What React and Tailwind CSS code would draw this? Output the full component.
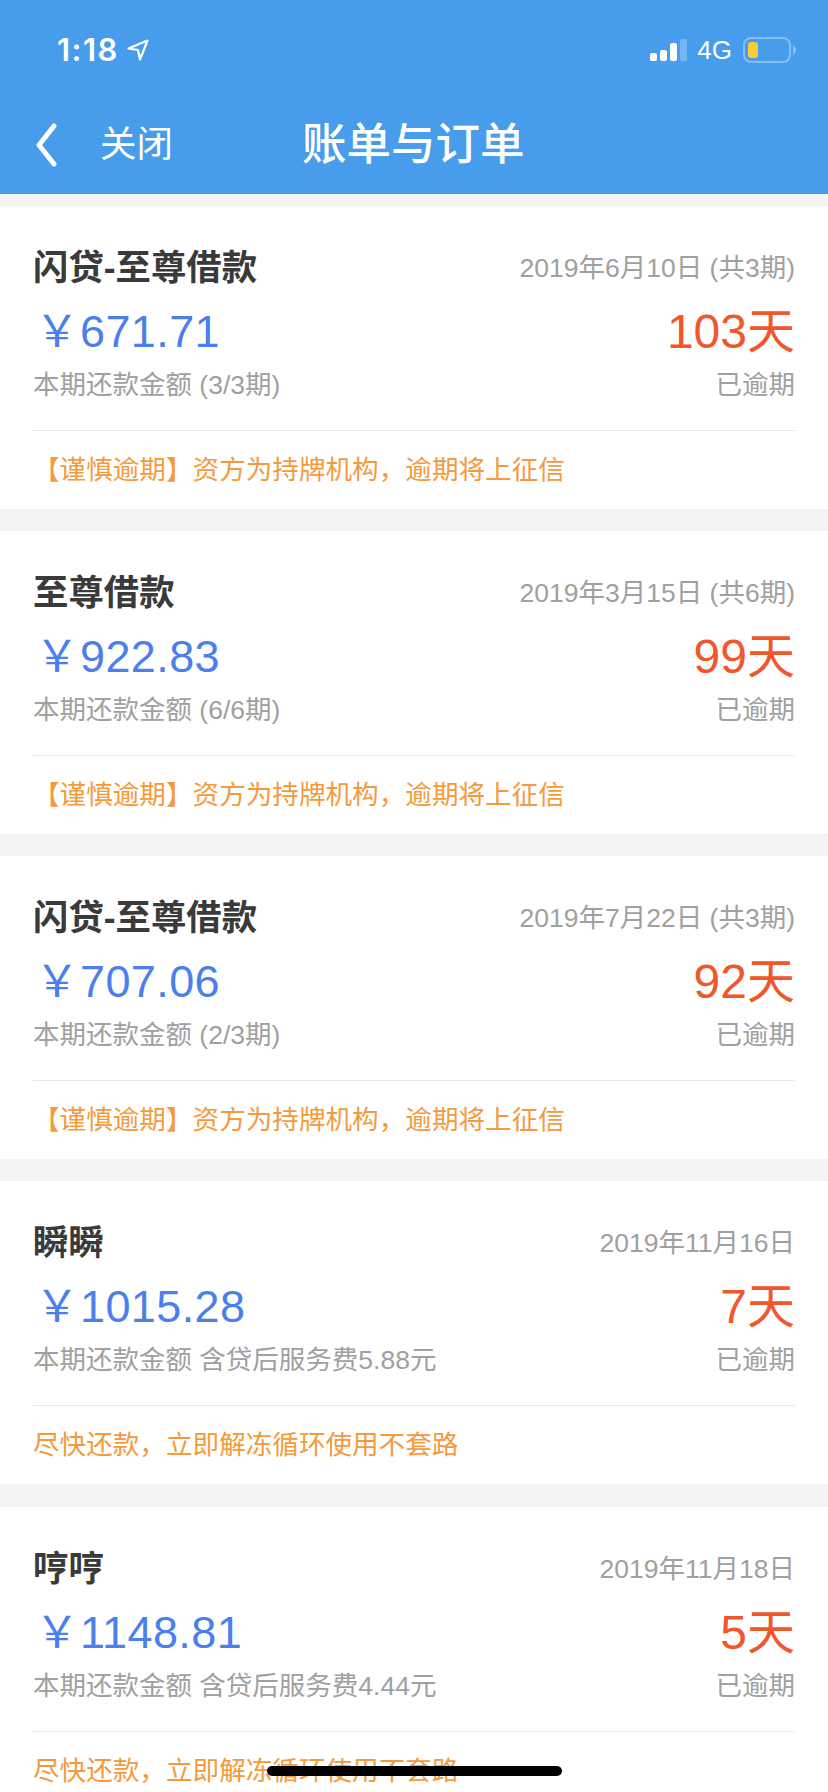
const FONT = '"Liberation Sans", "Noto Sans CJK SC", sans-serif';

const cards = [
  { t: '闪贷-至尊借款', d: '2019年6月10日 (共3期)', a: '671.71', n: '103天', s: '本期还款金额 (3/3期)', w: '【谨慎逾期】资方为持牌机构，逾期将上征信' },
  { t: '至尊借款', d: '2019年3月15日 (共6期)', a: '922.83', n: '99天', s: '本期还款金额 (6/6期)', w: '【谨慎逾期】资方为持牌机构，逾期将上征信' },
  { t: '闪贷-至尊借款', d: '2019年7月22日 (共3期)', a: '707.06', n: '92天', s: '本期还款金额 (2/3期)', w: '【谨慎逾期】资方为持牌机构，逾期将上征信' },
  { t: '瞬瞬', d: '2019年11月16日', a: '1015.28', n: '7天', s: '本期还款金额 含贷后服务费5.88元', w: '尽快还款，立即解冻循环使用不套路' },
  { t: '哼哼', d: '2019年11月18日', a: '1148.81', n: '5天', s: '本期还款金额 含贷后服务费4.44元', w: '尽快还款，立即解冻循环使用不套路' },
];

function Card({ c }) {
  return (
    <div className="bg-white h-[303px] shrink-0 pl-[33px] pr-[33px] flex flex-col">
      <div className="flex justify-between items-center h-[38px] mt-[43px]">
        <span className="text-[35.4px] leading-[38px] font-bold text-[#3a3a3a]">{c.t}</span>
        <span className="text-[26.5px] leading-[38px] text-[#a0a0a0]">{c.d}</span>
      </div>
      <div className="flex justify-between items-center h-[50px] mt-[20px]">
        <span className="flex items-center text-[#4a7fec] pl-[2px]">
          <span className="text-[44px] leading-[50px]">￥</span>
          <span className="text-[45px] leading-[50px] tracking-[0.4px] ml-[1px]">{c.a}</span>
        </span>
        <span className="text-[48px] leading-[50px] text-[#f0572b]">{c.n}</span>
      </div>
      <div className="flex justify-between items-center h-[38px] mt-[9px]">
        <span className="text-[26.5px] leading-[38px] text-[#a0a0a0]">{c.s}</span>
        <span className="text-[26.5px] leading-[38px] text-[#a0a0a0]">已逾期</span>
      </div>
      <div className="h-px bg-[#e8e8e8] mt-[26px]" />
      <div className="text-[26.6px] leading-[38px] text-[#f59a3c] mt-[20px] whitespace-nowrap">{c.w}</div>
    </div>
  );
}

export default function App() {
  return (
    <div className="relative h-[1792px] w-[828px] overflow-hidden bg-[#f4f4f4] flex flex-col" style={{ fontFamily: FONT }}>
      <header className="bg-[#479dec] h-[194px] shrink-0 text-white">
        <div className="flex justify-between items-center h-[34px] pt-[33px] pl-[57px] pr-[32px] box-content">
          <div className="flex items-center gap-[8px]">
            <span className="text-[31px] leading-[34px] font-semibold font-['Inter'] tracking-[1.5px]">1:18</span>
            <svg width="22" height="22" viewBox="0 0 22 22">
              <path d="M20.5 1.5 L1.5 9.5 L11 11 L13 20.5 Z" fill="none" stroke="white" strokeWidth="2.2" strokeLinejoin="round" />
            </svg>
          </div>
          <div className="flex items-center">
            <svg width="37" height="22" viewBox="0 0 37 22">
              <rect x="0" y="14" width="7" height="8" rx="2" fill="white" />
              <rect x="10" y="11" width="7" height="11" rx="2" fill="white" />
              <rect x="20" y="4" width="7" height="18" rx="2" fill="white" />
              <rect x="30" y="0" width="7" height="22" rx="1.5" fill="white" fillOpacity="0.25" />
            </svg>
            <span className="text-[26px] leading-[30px] ml-[10px]">4G</span>
            <svg width="53" height="26" viewBox="0 0 53 26" className="ml-[11px]">
              <rect x="1" y="1" width="46" height="24" rx="7" fill="none" stroke="white" strokeOpacity="0.35" strokeWidth="2" />
              <rect x="5" y="5" width="10" height="16" rx="3" fill="#f8cd3a" />
              <path d="M50 8.5 C52 9.5 53 11 53 13 C53 15 52 16.5 50 17.5 Z" fill="white" fillOpacity="0.35" />
            </svg>
          </div>
        </div>
        <div className="flex items-center h-[60px] mt-[48px] pl-[35px]">
          <svg width="22" height="44" viewBox="0 0 22 44" className="shrink-0">
            <path d="M19 3 L4 22 L19 41" fill="none" stroke="white" strokeWidth="5" strokeLinecap="round" strokeLinejoin="round" />
          </svg>
          <span className="text-[36.5px] leading-[50px] ml-[43px] w-[202px]">关闭</span>
          <span className="text-[44.5px] leading-[60px] font-medium">账单与订单</span>
        </div>
      </header>
      <main className="flex flex-col gap-[22.33px] pt-[11.5px]">
        {cards.map((c, i) => (
          <Card key={i} c={c} />
        ))}
      </main>
      <div className="absolute left-[267px] top-[1766px] w-[295px] h-[10px] rounded-full bg-black" />
    </div>
  );
}
